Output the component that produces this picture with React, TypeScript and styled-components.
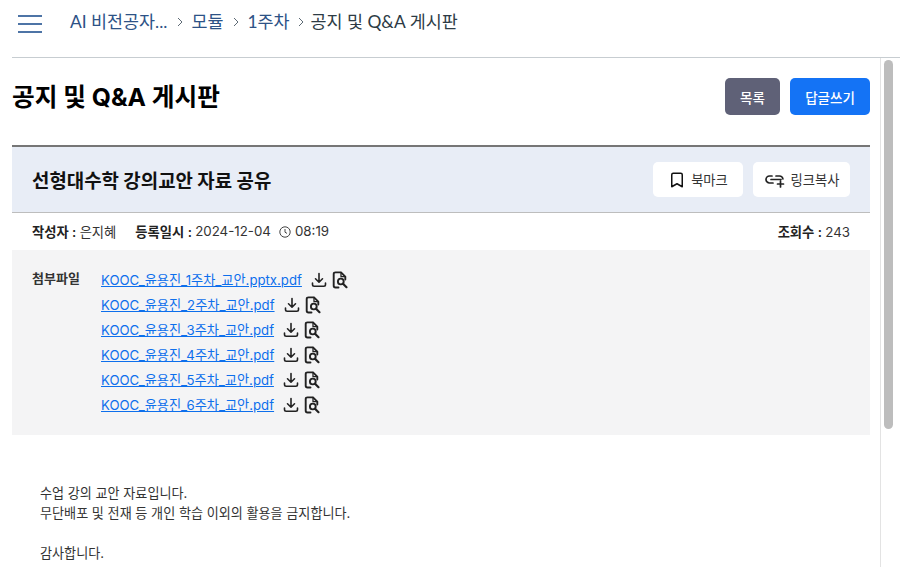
import React from "react";
import styled, { createGlobalStyle } from "styled-components";
import { Bookmark } from "lucide-react";

const KR = `Inter, "Noto Sans CJK KR", sans-serif`;

const Global = createGlobalStyle`
  html, body { margin: 0; padding: 0; background: #fff; overflow: hidden; }
  * { box-sizing: border-box; }
`;

const Page = styled.div`
  width: 900px;
  height: 567px;
  overflow: hidden;
  display: flex;
  flex-direction: column;
  font-family: ${KR};
  color: #222;
`;

const TopBar = styled.header`
  height: 58px;
  margin-left: 12px;
  border-bottom: 1px solid #c7cdd1;
  display: flex;
  align-items: flex-start;
  padding: 6px 0 0 6px;
  flex: none;
`;

const Burger = styled.button`
  width: 24px;
  height: 18px;
  margin-top: 9px;
  padding: 0;
  border: 0;
  background: none;
  display: flex;
  flex-direction: column;
  justify-content: space-between;
  & > span { display: block; height: 2px; background: #4e74a6; }
`;

const Crumbs = styled.nav`
  margin-left: 28px;
  display: flex;
  align-items: center;
  height: 28px;
  font-family: Lato, "Noto Sans CJK KR", sans-serif;
  font-size: 17.4px;
`;

const Crumb = styled.span<{ $current?: boolean }>`
  color: ${(p) => (p.$current ? "#2d3b45" : "#2d5286")};
  white-space: nowrap;
`;

const Chevron = styled.svg<{ $tight?: boolean }>`
  width: 6px;
  height: 10px;
  margin: 3px ${(p) => (p.$tight ? "7px 0 8px" : "8px 0 10px")};
  flex: none;
`;

const Body = styled.div`
  flex: 1;
  display: flex;
  min-height: 0;
`;

const Content = styled.main`
  width: 880px;
  padding: 0 10px 0 12px;
  flex: none;
`;

const TitleRow = styled.div`
  height: 87px;
  display: flex;
  align-items: flex-start;
  justify-content: space-between;
`;

const PageTitle = styled.h1`
  margin: 21px 0 0;
  font-size: 24.7px;
  line-height: 36px;
  font-weight: 700;
  color: #000;
`;

const ActionGroup = styled.div`
  display: flex;
  gap: 10px;
  margin-top: 20px;
`;

const ActionButton = styled.button<{ $primary?: boolean }>`
  height: 37px;
  width: ${(p) => (p.$primary ? "80px" : "55px")};
  border: 0;
  border-radius: 5px;
  padding: 0;
  background: ${(p) => (p.$primary ? "#1473f5" : "#5f6177")};
  color: #fff;
  font-family: ${KR};
  font-size: 13.5px;
  font-weight: 500;
`;

const PostHead = styled.section`
  height: 68px;
  border-top: 2px solid #767676;
  border-bottom: 1px solid #bdbdbd;
  background: #e8edf6;
  display: flex;
  align-items: center;
  justify-content: space-between;
  padding: 0 20px;
`;

const PostTitle = styled.h2`
  margin: 0 0 1px;
  font-size: 18.9px;
  font-weight: 700;
  color: #111;
`;

const HeadTools = styled.div`
  display: flex;
  gap: 10px;
`;

const ToolButton = styled.button<{ $w: number }>`
  width: ${(p) => p.$w}px;
  height: 35px;
  border: 0;
  border-radius: 5px;
  background: #fff;
  display: flex;
  align-items: center;
  justify-content: center;
  gap: 5px;
  padding: 0;
  font-family: ${KR};
  font-size: 13.3px;
  color: #333;
`;

const Meta = styled.div`
  height: 37px;
  padding: 0 20px 1px;
  display: flex;
  align-items: center;
  font-size: 13.3px;
  color: #333;
`;

const MetaItem = styled.span`
  display: inline-flex;
  align-items: center;
  white-space: pre;
  margin-right: 19px;
`;

const MetaLabel = styled.b`
  font-weight: 600;
  color: #222;
`;

const Views = styled.span`
  margin-left: auto;
`;

const Attach = styled.section`
  height: 185px;
  background: #f4f4f5;
  padding: 17px 20px 0;
  display: flex;
`;

const AttachLabel = styled.div`
  width: 69px;
  flex: none;
  font-size: 13px;
  line-height: 22px;
  font-weight: 600;
  color: #333;
`;

const FileList = styled.ul`
  list-style: none;
  margin: 0;
  padding: 0;
`;

const FileRow = styled.li`
  height: 25px;
  display: flex;
  align-items: center;
`;

const FileLink = styled.a`
  font-size: 13.2px;
  color: #0d6fec;
  text-decoration: underline;
  margin-right: 8px;
`;

const FileIcon = styled.svg`
  width: 18px;
  height: 18px;
  flex: none;
  margin-right: 3px;
`;

const Article = styled.article`
  padding: 48px 28px 0;
  font-size: 13.1px;
  line-height: 20px;
  color: #333;
  & > p { margin: 0; }
`;

const Track = styled.aside`
  width: 15px;
  flex: none;
  border-left: 1px solid #e3e3e3;
  padding: 2px 2px 0 3px;
`;

const Thumb = styled.div`
  height: 369px;
  width: 9px;
  border-radius: 5px;
  background: #bdbdbd;
`;

const ClockIcon = styled.svg`
  width: 12px;
  height: 12px;
  margin: 1px 4px 0 8px;
`;

const Download = () => (
  <FileIcon viewBox="0 0 18 18" fill="none" stroke="#222" strokeWidth="1.6" strokeLinecap="round" strokeLinejoin="round">
    <path d="M9 2.500v8.500M5.500 7.800 9 11.200l3.500-3.400M2.500 12v1.600c0 1 .7 1.700 1.700 1.700h9.600c1 0 1.700-.7 1.700-1.700V12" />
  </FileIcon>
);

const Preview = () => (
  <FileIcon viewBox="0 0 18 18" fill="none" stroke="#222" strokeWidth="1.9" strokeLinecap="round" strokeLinejoin="round">
    <path d="M7.500 16.500H4.500c-1.100 0-1.800-.7-1.800-1.700V3c0-1 .7-1.600 1.800-1.600H10l4.300 4.300v2.800" />
    <path d="M10 1.500v4.200h4.200" strokeWidth="1.300" />
    <circle cx="9.800" cy="10.500" r="2.900" />
    <path d="m12 12.800 3.500 3.400" strokeWidth="2.200" />
  </FileIcon>
);

const files = [
  "KOOC_윤용진_1주차_교안.pptx.pdf",
  "KOOC_윤용진_2주차_교안.pdf",
  "KOOC_윤용진_3주차_교안.pdf",
  "KOOC_윤용진_4주차_교안.pdf",
  "KOOC_윤용진_5주차_교안.pdf",
  "KOOC_윤용진_6주차_교안.pdf",
];

const Sep = ({ tight }: { tight?: boolean }) => (
  <Chevron $tight={tight} viewBox="0 0 6 10" fill="none" stroke="#5d6a75" strokeWidth="1">
    <path d="m1 1 4 4-4 4" />
  </Chevron>
);

export default function App() {
  return (
    <Page>
      <Global />
      <TopBar>
        <Burger aria-label="메뉴">
          <span />
          <span />
          <span />
        </Burger>
        <Crumbs>
          <Crumb>AI 비전공자...</Crumb>
          <Sep />
          <Crumb>모듈</Crumb>
          <Sep />
          <Crumb>1주차</Crumb>
          <Sep tight />
          <Crumb $current>공지 및 Q&amp;A 게시판</Crumb>
        </Crumbs>
      </TopBar>
      <Body>
        <Content>
          <TitleRow>
            <PageTitle>공지 및 Q&amp;A 게시판</PageTitle>
            <ActionGroup>
              <ActionButton>목록</ActionButton>
              <ActionButton $primary>답글쓰기</ActionButton>
            </ActionGroup>
          </TitleRow>
          <PostHead>
            <PostTitle>선형대수학 강의교안 자료 공유</PostTitle>
            <HeadTools>
              <ToolButton $w={90}>
                <Bookmark size={18} color="#111" strokeWidth={2} />
                북마크
              </ToolButton>
              <ToolButton $w={97}>
                <svg width="22" height="18" viewBox="0 0 22 18" fill="none" stroke="#222" strokeWidth="1.7" strokeLinecap="round">
                  <path d="M8 5H5.500a3.500 3.500 0 0 0 0 7H9M7 8.500h10M12 5h3.500a3.500 3.500 0 0 1 3.400 2.800M16.500 10v6M13.500 13h6" />
                </svg>
                링크복사
              </ToolButton>
            </HeadTools>
          </PostHead>
          <Meta>
            <MetaItem>
              <MetaLabel>작성자 : </MetaLabel>은지혜
            </MetaItem>
            <MetaItem>
              <MetaLabel>등록일시 : </MetaLabel>2024-12-04
              <ClockIcon viewBox="0 0 12 12" fill="none" stroke="#444" strokeWidth="1">
                <circle cx="6" cy="6" r="5.200" />
                <path d="M6 3v3.200l2 1.200" />
              </ClockIcon>
              08:19
            </MetaItem>
            <Views>
              <MetaLabel>조회수 : </MetaLabel>243
            </Views>
          </Meta>
          <Attach>
            <AttachLabel>첨부파일</AttachLabel>
            <FileList>
              {files.map((f) => (
                <FileRow key={f}>
                  <FileLink href="#">{f}</FileLink>
                  <Download />
                  <Preview />
                </FileRow>
              ))}
            </FileList>
          </Attach>
          <Article>
            <p>수업 강의 교안 자료입니다.</p>
            <p>무단배포 및 전재 등 개인 학습 이외의 활용을 금지합니다.</p>
            <p>&nbsp;</p>
            <p>감사합니다.</p>
          </Article>
        </Content>
        <Track>
          <Thumb />
        </Track>
      </Body>
    </Page>
  );
}
